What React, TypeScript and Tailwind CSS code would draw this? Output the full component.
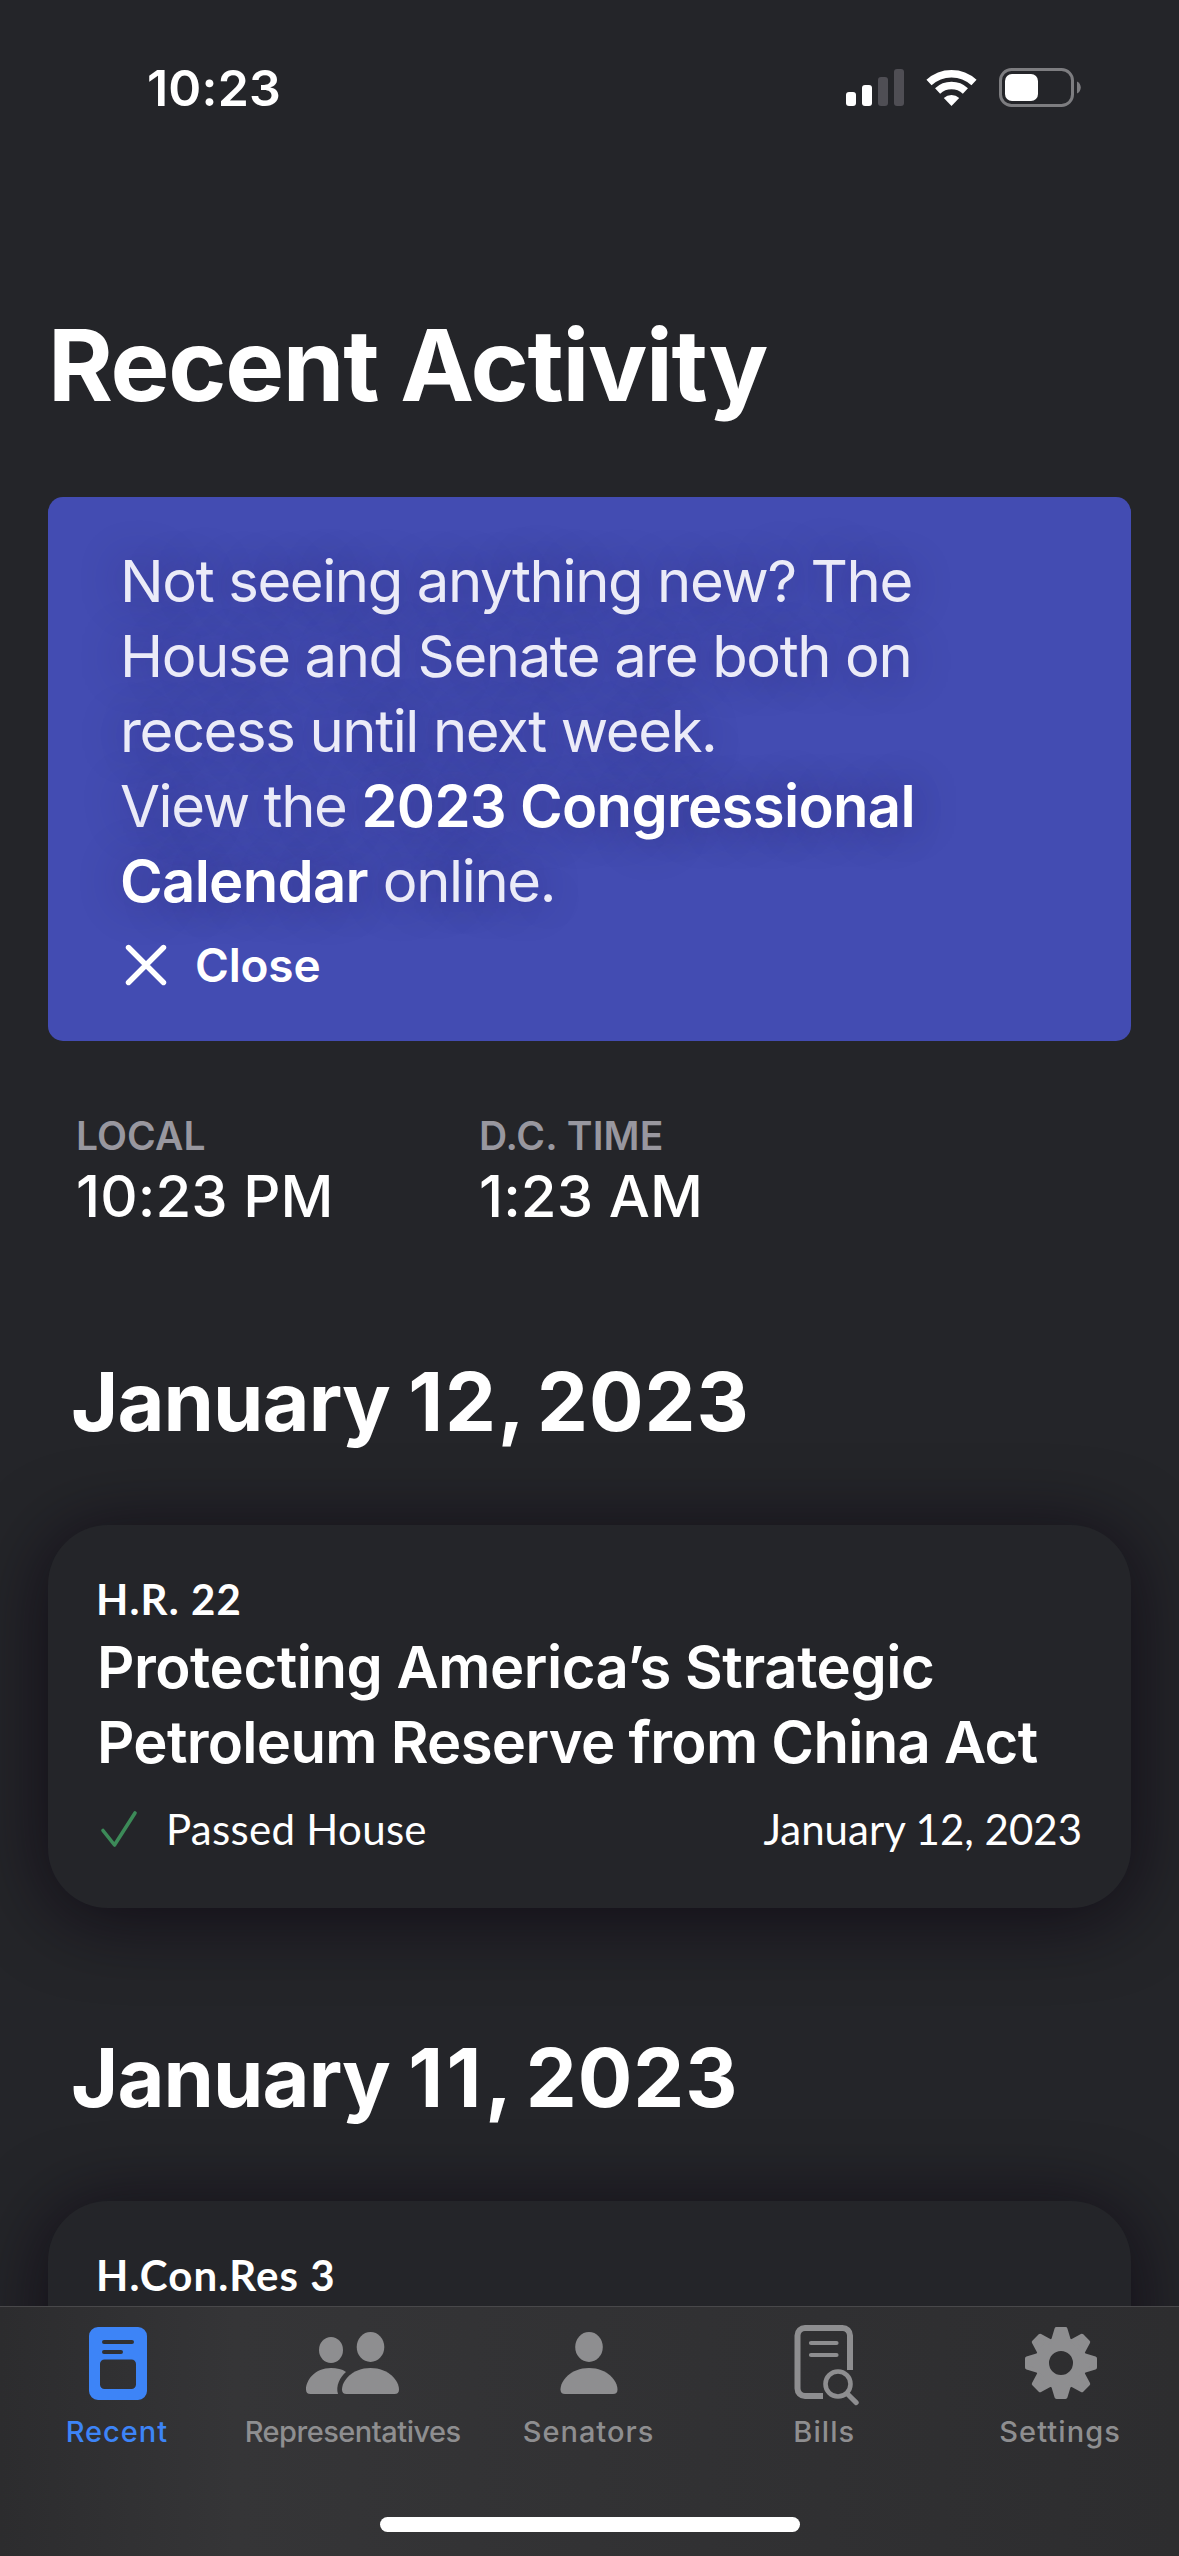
import type { ReactNode } from "react";

function StatusBar() {
  return (
    <div className="flex h-[176px] shrink-0 items-center justify-between pl-[147px] pr-[98px]">
      <p className="text-[50px] leading-[60px] font-semibold tracking-[0.2px]">10:23</p>
      <div className="flex items-center">
        <svg className="h-[38px] w-[58px]" viewBox="0 0 58 38">
          <rect x="0" y="23" width="10" height="14" rx="3" fill="#fff" />
          <rect x="16" y="16" width="10" height="21" rx="3" fill="#fff" />
          <rect x="32" y="8" width="10" height="29" rx="3" fill="#4f4e54" />
          <rect x="48" y="0" width="10" height="37" rx="3" fill="#4f4e54" />
        </svg>
        <svg className="ml-[22px] h-[38px] w-[51px]" viewBox="0 0 51 38" fill="none">
          <path d="M3 13.5a33 33 0 0 1 45 0" stroke="#fff" strokeWidth="7.5" />
          <path d="M11.6 22a20.5 20.5 0 0 1 27.8 0" stroke="#fff" strokeWidth="7.5" />
          <path d="M17.8 29a11.2 11.2 0 0 1 15.4 0L25.5 37Z" fill="#fff" />
        </svg>
        <svg className="ml-[22px] h-[40px] w-[82px]" viewBox="0 0 82 40">
          <rect x="1.5" y="1.5" width="72" height="36" rx="11" fill="none" stroke="#7d7d80" strokeWidth="3" />
          <rect x="6" y="6" width="33" height="27" rx="7" fill="#fff" />
          <path d="M78 13.5c5 2 5 10 0 12Z" fill="#7d7d80" />
        </svg>
      </div>
    </div>
  );
}

function RecessBanner() {
  return (
    <div className="mx-[48px] mt-[72px] h-[544px] shrink-0 rounded-[15px] bg-[#434cb2] pt-[47px] pl-[72px] [text-shadow:0_0_44px_rgba(30,20,70,0.45)]">
      <p className="w-[860px] text-[58px] leading-[75px] font-normal tracking-[-1.4px] text-[#ebebf8]">
        Not seeing anything new? The
        <br />
        House and Senate are both on
        <br />
        recess until next week.
        <br />
        View the <a className="font-semibold tracking-[-0.7px] text-white">2023 Congressional</a>
        <br />
        <a className="font-semibold tracking-[-0.7px] text-white">Calendar</a> online.
      </p>
      <button className="mt-[16px] flex h-[60px] items-center pl-[5px]">
        <svg className="size-[42px]" viewBox="0 0 42 42" fill="none" stroke="#fff" strokeWidth="5.4" strokeLinecap="round">
          <path d="M3.5 3.5 38.5 38.5M38.5 3.5 3.5 38.5" />
        </svg>
        <span className="ml-[28px] text-[46px] leading-[60px] font-semibold tracking-[-0.2px]">Close</span>
      </button>
    </div>
  );
}

function Clock({ label, time }: { label: string; time: string }) {
  return (
    <div className="w-[403px]">
      <p className="text-[39px] leading-[46px] font-semibold tracking-[0.1px] text-[#98979f]">{label}</p>
      <p className="text-[58px] leading-[74px] font-medium tracking-[0.1px]">{time}</p>
    </div>
  );
}

function DateHeading({ day, dayStyle }: { day: string; dayStyle: string }) {
  return (
    <h2 className="pl-[71px] text-[81px] leading-[100px] font-bold tracking-[-0.9px] whitespace-nowrap">
      January <span className={`[font-kerning:none] ${dayStyle}`}>{day},</span>{" "}
      <span className="-ml-[8px] tracking-[1px]">2023</span>
    </h2>
  );
}

function BillCard({ number, children }: { number: string; children?: ReactNode }) {
  return (
    <div className="mx-[48px] mt-[73px] h-[383px] shrink-0 rounded-[60px] bg-[#242529] px-[49px] pt-[49px] shadow-[0_8px_76px_rgba(10,4,16,0.76)]">
      <p className="-ml-px font-[Lato] text-[42px] leading-[50px] font-bold tracking-[1.1px]">{number}</p>
      {children}
    </div>
  );
}

function RecentIcon() {
  return (
    <svg className="size-[82px]" viewBox="0 0 82 82" fill="currentColor">
      <path
        fillRule="evenodd"
        d="M21 5h40a9 9 0 0 1 9 9v55a9 9 0 0 1-9 9H21a9 9 0 0 1-9-9V14a9 9 0 0 1 9-9ZM27 18a2 2 0 0 0 0 4h28a2 2 0 0 0 0-4ZM27 28a2 2 0 0 0 0 4h17a2 2 0 0 0 0-4ZM27.5 37.5a4.5 4.5 0 0 0-4.5 4.5v20.5a4.5 4.5 0 0 0 4.5 4.5h27a4.5 4.5 0 0 0 4.5-4.5V42a4.5 4.5 0 0 0-4.5-4.5Z"
      />
    </svg>
  );
}

function PeopleIcon() {
  return (
    <svg className="h-[82px] w-[100px]" viewBox="0 0 100 82" fill="currentColor">
      <ellipse cx="27" cy="28" rx="12" ry="13" />
      <ellipse cx="66.5" cy="25" rx="13.8" ry="15" />
      <path d="M42 50c-4-3-9-4-15-4C11 46 2 58 2 67.5Q2 72 6.5 72H34c-2.5-8 2-17 8-22Z" />
      <path d="M66.5 46C48 46 38 59 38 67.5Q38 72 42.5 72h48Q95 72 95 67.5C95 59 85 46 66.5 46Z" />
    </svg>
  );
}

function PersonIcon() {
  return (
    <svg className="size-[82px]" viewBox="0 0 82 82" fill="currentColor">
      <ellipse cx="41" cy="25" rx="13.8" ry="15" />
      <path d="M41 46C22.5 46 12.5 59 12.5 67.5q0 4.5 4.5 4.5h48q4.5 0 4.5-4.5C69.5 59 59.5 46 41 46Z" />
    </svg>
  );
}

function BillsIcon() {
  return (
    <svg className="size-[86px]" viewBox="0 -2 86 86" fill="none" stroke="currentColor" strokeLinecap="round">
      <path d="M41 74H23a7.5 7.5 0 0 1-7.5-7.500v-53A7.5 7.5 0 0 1 23 6h37.500a7.500 7.500 0 0 1 7.500 7.500V48" strokeWidth="6" strokeLinecap="butt" />
      <path d="M29 21h25.500M29 33h25.500" strokeWidth="4.2" />
      <circle cx="56" cy="62" r="12.5" strokeWidth="4.6" />
      <path d="m65.500 72 8.700 8.600" strokeWidth="5" />
    </svg>
  );
}

function GearIcon() {
  return (
    <svg className="size-[82px]" viewBox="-41 -41 82 82" fill="currentColor" stroke="currentColor" strokeLinejoin="round">
      <circle r="19" fill="none" strokeWidth="14" />
      {[0, 45, 90, 135, 180, 225, 270, 315].map((angle) => (
        <path key={angle} d="M-7.5-24-4.5-34h9l3 10Z" strokeWidth="4" transform={`rotate(${angle})`} />
      ))}
    </svg>
  );
}

const tabs = [
  { label: "Recent", icon: <RecentIcon />, style: "text-[#3d84f7] tracking-[1px]" },
  { label: "Representatives", icon: <PeopleIcon />, style: "text-[#8e8e90] tracking-[-0.5px]" },
  { label: "Senators", icon: <PersonIcon />, style: "text-[#8e8e90] tracking-[1px]" },
  { label: "Bills", icon: <BillsIcon />, style: "text-[#8e8e90] tracking-[1.1px]" },
  { label: "Settings", icon: <GearIcon />, style: "text-[#8e8e90] tracking-[1.1px]" },
];

function TabBar() {
  return (
    <nav className="flex h-[250px] shrink-0 flex-col items-center border-t border-[#48484a] bg-linear-to-r from-[#2c2c2e] via-[#353537] via-20% to-[#2d2d2f]">
      <div className="grid w-full grid-cols-5 pt-[15px]">
        {tabs.map((tab) => (
          <div key={tab.label} className={`flex flex-col items-center ${tab.style}`}>
            <div className="flex h-[82px] items-center">{tab.icon}</div>
            <span className="mt-[8px] mr-[2px] text-[29px] leading-[40px] font-medium">{tab.label}</span>
          </div>
        ))}
      </div>
      <div className="mt-[65px] h-[15px] w-[420px] rounded-full bg-white" />
    </nav>
  );
}

export default function App() {
  return (
    <div className="flex h-[2556px] w-[1179px] flex-col overflow-hidden bg-[#242529] font-[Inter,sans-serif] text-white">
      <main className="flex min-h-0 flex-1 flex-col overflow-hidden">
        <StatusBar />
        <h1 className="mt-[129px] pl-[48px] text-[99px] leading-[120px] font-bold tracking-[-1.3px]">Recent Activity</h1>
        <RecessBanner />
        <div className="mt-[72px] flex pl-[76px]">
          <Clock label="LOCAL" time="10:23 PM" />
          <Clock label="D.C. TIME" time="1:23 AM" />
        </div>
        <div className="mt-[119px]">
          <DateHeading day="12" dayStyle="tracking-[1.8px]" />
          <BillCard number="H.R. 22">
            <h3 className="mt-[6px] text-[58px] leading-[75px] font-semibold whitespace-nowrap">
              <span className="tracking-[-0.46px]">Protecting America’s Strategic</span>
              <br />
              <span className="tracking-[-0.7px]">Petroleum Reserve from China Act</span>
            </h3>
            <div className="mt-[24px] flex h-[50px] items-center font-[Lato] text-[42px] leading-[50px]">
              <svg className="ml-[3px] size-[38px]" viewBox="0 0 38 38" fill="none" stroke="#3c8a58" strokeWidth="3.6" strokeLinecap="round" strokeLinejoin="round">
                <path d="M3 20.5 14.5 35 35 3" />
              </svg>
              <span className="ml-[28px] tracking-[0.3px]">Passed House</span>
              <span className="ml-auto">January 12, 2023</span>
            </div>
          </BillCard>
        </div>
        <div className="mt-[120px]">
          <DateHeading day="11" dayStyle="tracking-[3.4px]" />
          <BillCard number="H.Con.Res 3" />
        </div>
      </main>
      <TabBar />
    </div>
  );
}
